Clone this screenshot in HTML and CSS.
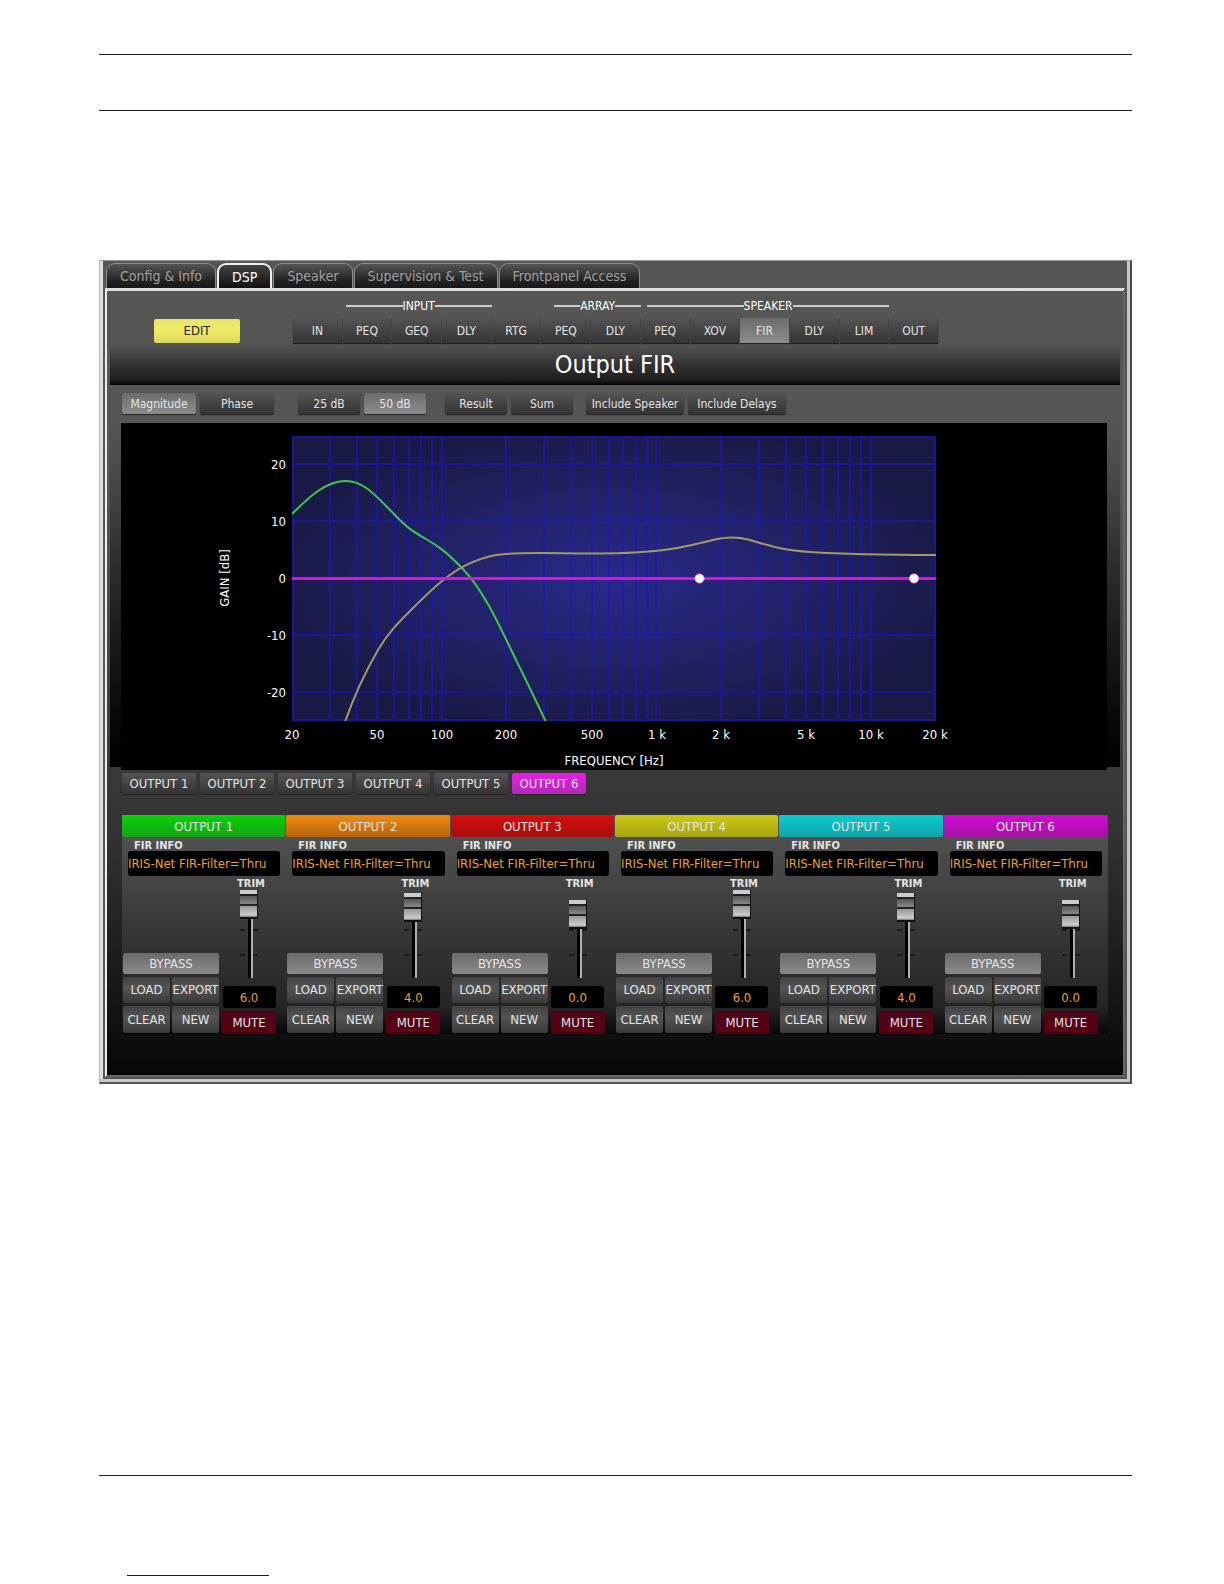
FILE: index.html
```html
<!DOCTYPE html>
<html lang="en">
<head>
<meta charset="utf-8">
<title>Output FIR</title>
<link rel="stylesheet" href="styles.css">
</head>
<body>
<header class="page-head"></header>
<main class="window">
  <nav class="tabs">
    <button class="tab">Config &amp; Info</button>
    <button class="tab active">DSP</button>
    <button class="tab">Speaker</button>
    <button class="tab">Supervision &amp; Test</button>
    <button class="tab">Frontpanel Access</button>
  </nav>
  <div class="panel">
    <div class="chain">
      <button class="edit">EDIT</button>
      <div class="blocks">
        <span class="group g-input">INPUT</span>
        <span class="group g-array">ARRAY</span>
        <span class="group g-speaker">SPEAKER</span>
        <button class="btn block">IN</button>
        <button class="btn block">PEQ</button>
        <button class="btn block">GEQ</button>
        <button class="btn block">DLY</button>
        <button class="btn block">RTG</button>
        <button class="btn block">PEQ</button>
        <button class="btn block">DLY</button>
        <button class="btn block">PEQ</button>
        <button class="btn block">XOV</button>
        <button class="btn block on">FIR</button>
        <button class="btn block">DLY</button>
        <button class="btn block">LIM</button>
        <button class="btn block">OUT</button>
      </div>
    </div>
    <h1 class="title">Output FIR</h1>
    <section class="view">
      <div class="toolbar">
        <div class="set"><button class="btn wide on">Magnitude</button><button class="btn wide">Phase</button></div>
        <div class="set"><button class="btn mid">25 dB</button><button class="btn mid on">50 dB</button></div>
        <div class="set"><button class="btn mid">Result</button><button class="btn mid">Sum</button></div>
        <div class="set"><button class="btn long">Include Speaker</button><button class="btn long">Include Delays</button></div>
      </div>
      <svg class="chart" viewBox="121 423 986 347" role="img" aria-label="Gain over frequency">
        <defs>
          <radialGradient id="glow" cx="0.5" cy="0.5" r="0.55">
            <stop offset="0" stop-color="#29298a"/>
            <stop offset="0.5" stop-color="#222268"/>
            <stop offset="1" stop-color="#191945"/>
          </radialGradient>
          <clipPath id="plot"><rect x="292" y="436" width="644" height="285"/></clipPath>
        </defs>
        <rect x="121" y="423" width="986" height="347" fill="#000"/>
        <rect x="292" y="436" width="644" height="285" fill="url(#glow)"/>
        <path class="grid" d="M330 436v285M357 436v285M377 436v285M394 436v285M409 436v285M421 436v285M432 436v285M442 436v285M506 436v285M544 436v285M571 436v285M592 436v285M609 436v285M623 436v285M636 436v285M647 436v285M656 436v285M721 436v285M759 436v285M786 436v285M806 436v285M823 436v285M838 436v285M850 436v285M861 436v285M871 436v285M292 464h644M292 521h644M292 635h644M292 692h644M293 437h642v283h-642z"/>
        <g clip-path="url(#plot)" fill="none">
          <path stroke="#a69a62" stroke-width="2" d="M345 722C352 702 364 674 378 650C388 633 398 623 410 611C420 601 431 590 442 581C460 566 482 556 505 554C530 552 560 553.5 590 553.5C620 553.5 640 552.5 655 551C680 549 700 543 717 539C727 537 738 537 748 539.500C768 545 780 550 810 552C840 554 880 555 936 555"/>
          <path stroke="#3fc848" stroke-width="2" d="M292 514C310 496 326 481 346 481C364 481 376 496 394 514C406 527 412 531 426 539C440 547 446 552 461 567C486 592 503 634 518 664C528 684 537 703 546 722"/>
          <path stroke="#e010e0" stroke-width="3" d="M292 578.500H936"/>
        </g>
        <circle cx="699.500" cy="578.500" r="4.500" fill="#fff" stroke="#f5a0f5"/>
        <circle cx="914" cy="578.500" r="4.500" fill="#fff" stroke="#f5a0f5"/>
        <g class="axis end">
          <text x="286" y="469">20</text><text x="286" y="526">10</text><text x="286" y="583">0</text><text x="286" y="640">-10</text><text x="286" y="697">-20</text>
        </g>
        <g class="axis">
          <text x="292" y="739">20</text><text x="377" y="739">50</text><text x="442" y="739">100</text><text x="506" y="739">200</text><text x="592" y="739">500</text><text x="657" y="739">1 k</text><text x="721" y="739">2 k</text><text x="806" y="739">5 k</text><text x="871" y="739">10 k</text><text x="935" y="739">20 k</text>
          <text x="614" y="765">FREQUENCY [Hz]</text>
          <text transform="translate(229 578) rotate(-90)">GAIN [dB]</text>
        </g>
      </svg>
    </section>
    <div class="outputs">
      <button class="btn wide">OUTPUT 1</button>
      <button class="btn wide">OUTPUT 2</button>
      <button class="btn wide">OUTPUT 3</button>
      <button class="btn wide">OUTPUT 4</button>
      <button class="btn wide">OUTPUT 5</button>
      <button class="btn wide picked">OUTPUT 6</button>
    </div>
    <div class="strips">
      <section class="strip">
        <h2 class="name green">OUTPUT 1</h2>
        <label class="cap" for="fir1">FIR INFO</label>
        <input class="info" id="fir1" value="IRIS-Net FIR-Filter=Thru" readonly>
        <div class="controls">
          <div class="keys"><button class="key bypass">BYPASS</button><button class="key">LOAD</button><button class="key">EXPORT</button><button class="key">CLEAR</button><button class="key">NEW</button></div>
          <div class="trim"><label class="trim-cap" for="trim1">TRIM</label><input class="fader" id="trim1" type="range" min="-30" max="6" value="6"><output class="level" for="trim1">6.0</output><button class="mute">MUTE</button></div>
        </div>
      </section>
      <section class="strip">
        <h2 class="name orange">OUTPUT 2</h2>
        <label class="cap" for="fir2">FIR INFO</label>
        <input class="info" id="fir2" value="IRIS-Net FIR-Filter=Thru" readonly>
        <div class="controls">
          <div class="keys"><button class="key bypass">BYPASS</button><button class="key">LOAD</button><button class="key">EXPORT</button><button class="key">CLEAR</button><button class="key">NEW</button></div>
          <div class="trim"><label class="trim-cap" for="trim2">TRIM</label><input class="fader" id="trim2" type="range" min="-30" max="6" value="4"><output class="level" for="trim2">4.0</output><button class="mute">MUTE</button></div>
        </div>
      </section>
      <section class="strip">
        <h2 class="name red">OUTPUT 3</h2>
        <label class="cap" for="fir3">FIR INFO</label>
        <input class="info" id="fir3" value="IRIS-Net FIR-Filter=Thru" readonly>
        <div class="controls">
          <div class="keys"><button class="key bypass">BYPASS</button><button class="key">LOAD</button><button class="key">EXPORT</button><button class="key">CLEAR</button><button class="key">NEW</button></div>
          <div class="trim"><label class="trim-cap" for="trim3">TRIM</label><input class="fader" id="trim3" type="range" min="-30" max="6" value="0"><output class="level" for="trim3">0.0</output><button class="mute">MUTE</button></div>
        </div>
      </section>
      <section class="strip">
        <h2 class="name yellow">OUTPUT 4</h2>
        <label class="cap" for="fir4">FIR INFO</label>
        <input class="info" id="fir4" value="IRIS-Net FIR-Filter=Thru" readonly>
        <div class="controls">
          <div class="keys"><button class="key bypass">BYPASS</button><button class="key">LOAD</button><button class="key">EXPORT</button><button class="key">CLEAR</button><button class="key">NEW</button></div>
          <div class="trim"><label class="trim-cap" for="trim4">TRIM</label><input class="fader" id="trim4" type="range" min="-30" max="6" value="6"><output class="level" for="trim4">6.0</output><button class="mute">MUTE</button></div>
        </div>
      </section>
      <section class="strip">
        <h2 class="name cyan">OUTPUT 5</h2>
        <label class="cap" for="fir5">FIR INFO</label>
        <input class="info" id="fir5" value="IRIS-Net FIR-Filter=Thru" readonly>
        <div class="controls">
          <div class="keys"><button class="key bypass">BYPASS</button><button class="key">LOAD</button><button class="key">EXPORT</button><button class="key">CLEAR</button><button class="key">NEW</button></div>
          <div class="trim"><label class="trim-cap" for="trim5">TRIM</label><input class="fader" id="trim5" type="range" min="-30" max="6" value="4"><output class="level" for="trim5">4.0</output><button class="mute">MUTE</button></div>
        </div>
      </section>
      <section class="strip">
        <h2 class="name magenta">OUTPUT 6</h2>
        <label class="cap" for="fir6">FIR INFO</label>
        <input class="info" id="fir6" value="IRIS-Net FIR-Filter=Thru" readonly>
        <div class="controls">
          <div class="keys"><button class="key bypass">BYPASS</button><button class="key">LOAD</button><button class="key">EXPORT</button><button class="key">CLEAR</button><button class="key">NEW</button></div>
          <div class="trim"><label class="trim-cap" for="trim6">TRIM</label><input class="fader" id="trim6" type="range" min="-30" max="6" value="0"><output class="level" for="trim6">0.0</output><button class="mute">MUTE</button></div>
        </div>
      </section>
    </div>
  </div>
</main>
<footer class="page-foot"><a class="foot-link" href="#top" aria-label="Top of page"></a></footer>
</body>
</html>
```

FILE: styles.css
```css
* { box-sizing: border-box; }

body {
  margin: 0;
  padding: 54px 92px 8px 99px;
  background: #fff;
  color: #e4e4e4;
  font: 12px/16px "DejaVu Sans Condensed", "Noto Sans", sans-serif;
}

button, input { font: inherit; color: inherit; border: 0; margin: 0; padding: 0; }
h1, h2 { margin: 0; font-weight: normal; }

.page-head { height: 57px; border: solid #231f20; border-width: 1px 0; margin-bottom: 149px; }
.page-foot { margin-top: 391px; border-top: 1px solid #231f20; padding: 80px 0 0 28px; }
.foot-link { display: block; width: 142px; height: 20px; border-bottom: 1px solid #1a1478; }

/* Window frame */
.window {
  background: #555;
  border: solid;
  border-width: 1px 2px 2px 1px;
  border-color: #999 #4a4a4a #555 #bbb;
  box-shadow: inset -3px -3px 0 #c8c8c8, inset 3px 0 0 #deded8;
  padding: 2px 5px 5px 5px;
}

.tabs { display: flex; gap: 1px; height: 25px; padding-left: 1px; }
.tab {
  padding: 0 13px;
  border: 1px solid #8c8c8c;
  border-bottom: 0;
  border-radius: 9px 9px 0 0;
  background: linear-gradient(#555, #222 70%, #181818);
  color: #a0a0a0;
  font-size: 14px;
}
.tab.active { background: linear-gradient(#444, #111); border: 2px solid #eee; border-bottom: 0; color: #fff; }

.panel {
  border: solid;
  border-width: 3px 2px 2px 2px;
  border-color: #ddd #666 #666 #eee;
  background: linear-gradient(#565654, #555 25%, #3a3a3a 58%, #343434 68%, #080808);
  padding: 10px 3px 41px 3px;
}

/* Signal chain */
.chain { display: flex; align-items: flex-end; height: 43px; padding: 0 0 1px 44px; gap: 53px; }
.edit { width: 86px; height: 24px; background: linear-gradient(#e9e468, #f0ec68 50%, #d8d458); color: #222; border-radius: 2px; font-size: 13px; }
.blocks { display: grid; grid-template-columns: repeat(13, 1fr); grid-template-rows: 16px 25px; flex: 0 1 646px; row-gap: 4px; }
.group { display: flex; align-items: center; color: #fff; line-height: 12px; }
.group::before, .group::after { content: ""; flex: 1; height: 2px; background: #ccc; }
.g-input { grid-column: 2 / 5; margin-left: 3px; }
.g-array { grid-column: 6 / 8; margin-left: 13px; }
.g-speaker { grid-column: 8 / 13; margin-left: 6px; }

.btn {
  height: 21px;
  background: linear-gradient(#545454, #404040 60%, #343434);
  border-radius: 2px;
  box-shadow: 0 1px 1px #222;
  white-space: nowrap;
}
.btn.block { height: 25px; border-radius: 0; margin-right: 1px; grid-row: 2; }
.btn.on { background: linear-gradient(#6c6c6c, #8c8c8c); }
.btn.picked { background: linear-gradient(#e81ce8, #b428b8); }
.wide { width: 74px; }
.mid { width: 62px; }
.long { width: 98px; }

.title {
  height: 41px;
  background: linear-gradient(transparent, #333 50%, #1c1c1c 90%, #000);
  color: #fff;
  font-size: 25px;
  line-height: 42px;
  text-align: center;
}

/* Graph */
.view { padding: 8px 13px 0 11px; background: linear-gradient(transparent 10%, #000) no-repeat top / 100% 382px; }
.toolbar { display: flex; height: 30px; gap: 19px; padding-left: 1px; }
.set { display: flex; gap: 4px; }
.set:first-child { margin-right: 5px; }
.set:last-child { margin-left: -6px; }
.chart { display: block; width: 100%; }
.grid { fill: none; stroke: #1c16c0; stroke-width: 2; stroke-opacity: 0.65; }
.axis { fill: #fff; font-size: 13px; text-anchor: middle; }
.axis.end { text-anchor: end; }

.outputs { display: flex; gap: 4px; padding: 3px 12px 21px; font-size: 13px; }

/* Channel strips */
.strips { display: grid; grid-template-columns: repeat(6, 1fr); margin: 0 12px 0 12px; font-size: 13px; }
.strip { height: 219px; background: linear-gradient(#565656, #333 60%, #242424 88%, #060606); }
.name {
  height: 22px;
  margin-right: 1px;
  border-radius: 2px;
  font-size: 13px;
  line-height: 23px;
  text-align: center;
  background: linear-gradient(var(--hi), var(--lo));
}
.green { --hi: #0ad20a; --lo: #14a414; }
.orange { --hi: #f08c14; --lo: #b86408; }
.red { --hi: #d80c0c; --lo: #a81010; }
.yellow { --hi: #ccc814; --lo: #a8a410; }
.cyan { --hi: #0accd0; --lo: #10a4a8; }
.magenta { --hi: #d00cd0; --lo: #a810a8; }
.cap { display: block; margin-left: 12px; height: 14px; font-size: 11px; font-weight: bold; line-height: 18px; }
.info {
  display: block;
  width: calc(100% - 12px);
  height: 25px;
  margin-left: 6px;
  border-radius: 3px;
  background: #000;
  color: #f0a020;
}
.controls { display: flex; gap: 3px; }
.keys { display: grid; grid-template-columns: 47px 47px; grid-template-rows: 21px 26px 27px; gap: 3px 2px; align-content: end; height: 157px; margin-left: 1px; }
.key { background: linear-gradient(#424242, #545454 40%, #3a3a3a); border-radius: 2px; white-space: nowrap; }
.key.bypass { grid-column: 1 / 3; background: linear-gradient(#6a6a6a, #8a8a8a); }

.trim { display: flex; flex-direction: column; align-items: center; width: 54px; }
.trim-cap { height: 14px; padding-left: 4px; font-size: 11px; font-weight: bold; }
.fader {
  appearance: none;
  writing-mode: vertical-lr;
  direction: rtl;
  width: 18px;
  height: 88px;
  background:
    linear-gradient(90deg, transparent 8px, #000 8px 11px, #b0b0b0 11px 13px, transparent 13px) no-repeat 0 20px,
    linear-gradient(90deg, #1a1a1a 5px, transparent 5px 13px, #1a1a1a 13px) no-repeat 0 39px / 100% 2px,
    linear-gradient(90deg, #1a1a1a 5px, transparent 5px 13px, #1a1a1a 13px) no-repeat 0 64px / 100% 2px;
}
.fader::-webkit-slider-thumb {
  appearance: none;
  width: 18px;
  height: 29px;
  border: solid #111;
  border-width: 0 1px 2px 0;
  background: linear-gradient(#ccc 0 4px, #222 4px 6px, #555 6px, #888 14px, #222 14px 16px, #999 16px, #ccc 25px, #777 27px);
}
.level { width: 53px; height: 22px; margin-top: 8px; border-radius: 3px; background: #000; color: #f0a020; line-height: 24px; text-align: center; }
.mute { width: 54px; height: 23px; margin-top: 3px; background: linear-gradient(#500418, #580014); border-radius: 2px; }
```
